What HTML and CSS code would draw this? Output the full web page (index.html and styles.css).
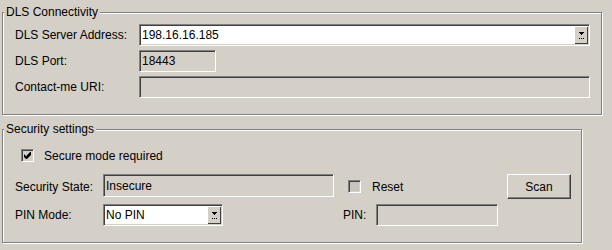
FILE: index.html
```html
<!DOCTYPE html>
<html lang="en">
<head>
    <meta charset="UTF-8">
    <meta name="viewport" content="width=device-width, initial-scale=1.0">
    <title>DLS Settings</title>
    <link rel="stylesheet" href="styles.css">
</head>
<body>
    <div class="panel">
        <div class="group group-dls">
            <span class="group-title">DLS Connectivity</span>
            <div class="form-grid">
                <label>DLS Server Address:</label>
                <div class="combo">
                    <span class="value">198.16.16.185</span>
                    <span class="drop-btn">
                        <svg width="7" height="8" viewBox="0 0 7 8"><path d="M1 0h5v1H1zM2 1h3v1H2zM3 2h1v1H3zM1 6h1v1H1zM3 6h1v1H3zM5 6h1v1H5z" fill="#000"/></svg>
                    </span>
                </div>
                <label>DLS Port:</label>
                <div class="field port">18443</div>
                <label>Contact-me URI:</label>
                <div class="field"></div>
            </div>
        </div>

        <div class="group group-security">
            <span class="group-title">Security settings</span>
            <div class="check-row">
                <span class="checkbox">
                    <svg width="7" height="7" viewBox="0 0 7 7"><path d="M6 0h1v3L3 7H2L0 5V2l2 2.2z" fill="#000"/></svg>
                </span>
                <span>Secure mode required</span>
            </div>
            <div class="security-grid">
                <label class="c1">Security State:</label>
                <div class="field state">Insecure</div>
                <div class="reset">
                    <span class="checkbox disabled"></span>
                    <span>Reset</span>
                </div>
                <button class="btn">Scan</button>

                <label class="c1">PIN Mode:</label>
                <div class="combo pin-mode">
                    <span class="value">No PIN</span>
                    <span class="drop-btn">
                        <svg width="7" height="8" viewBox="0 0 7 8"><path d="M1 0h5v1H1zM2 1h3v1H2zM3 2h1v1H3zM1 6h1v1H1zM3 6h1v1H3zM5 6h1v1H5z" fill="#000"/></svg>
                    </span>
                </div>
                <label class="pin-label">PIN:</label>
                <div class="field pin"></div>
            </div>
        </div>
    </div>
</body>
</html>
```

FILE: styles.css
```css
body {
    margin: 0;
    height: 250px;
    overflow: hidden;
    background-color: #d4d0c8;
    font-family: "Liberation Sans", Arial, sans-serif;
    font-size: 12px;
    color: #000;
}

.panel {
    padding: 12px 0 0 2px;
}

/* etched group box */
.group {
    position: relative;
    box-sizing: border-box;
    border: 1px solid #808080;
    box-shadow: inset 1px 1px 0 #fff, 1px 1px 0 #fff;
}

.group-title {
    position: absolute;
    top: -8px;
    left: 1px;
    padding: 0 2px;
    line-height: 14px;
    background-color: #d4d0c8;
}

.group-dls {
    width: 600px;
    height: 103px;
    padding: 11px 11px 0 12px;
}

.group-security {
    width: 580px;
    height: 114px;
    margin-top: 14px;
    padding: 19px 0 0 12px;
}

.form-grid {
    display: grid;
    grid-template-columns: 124px 1fr;
    grid-auto-rows: 22px;
    row-gap: 4px;
    align-items: center;
}

/* sunken inputs */
.field,
.combo {
    box-sizing: border-box;
    height: 22px;
    display: flex;
    align-items: center;
    padding-left: 2px;
    border-style: solid;
    border-width: 1px;
    border-color: #808080 #fff #fff #808080;
    box-shadow: inset 1px 1px 0 #404040, inset -1px -1px 0 #d4d0c8;
    background-color: #d4d0c8;
    white-space: nowrap;
}

.combo {
    background-color: #fff;
    padding: 1px 1px 1px 2px;
    align-items: stretch;
}

.combo .value {
    flex: 1;
    display: flex;
    align-items: center;
}

.drop-btn {
    width: 14px;
    display: flex;
    justify-content: center;
    align-items: flex-start;
    padding-top: 6px;
    box-sizing: border-box;
    background-color: #d4d0c8;
    box-shadow: inset 1px 1px 0 #fff, inset -1px -1px 0 #404040;
}

.port {
    width: 77px;
}

.check-row {
    display: flex;
    align-items: center;
    gap: 10px;
    height: 13px;
    margin-left: 6px;
    margin-bottom: 12px;
}

.checkbox {
    box-sizing: border-box;
    width: 13px;
    height: 13px;
    display: flex;
    justify-content: center;
    align-items: center;
    border-style: solid;
    border-width: 1px;
    border-color: #808080 #fff #fff #808080;
    box-shadow: inset 1px 1px 0 #404040, inset -1px -1px 0 #d4d0c8;
    background-color: #d4d0c8;
}

.checkbox.disabled {
    background-color: #c8c4bc;
}

.security-grid {
    display: grid;
    grid-template-columns: 88px 231px 9px 33px 122px 9px 64px;
    grid-template-rows: 25px 22px;
    row-gap: 5px;
    align-items: center;
}

.c1 {
    grid-column: 1;
}

.state {
    grid-column: 2;
    height: 23px;
    align-self: start;
}

.reset {
    grid-column: 4 / span 2;
    display: flex;
    align-items: center;
    gap: 11px;
    margin-left: 5px;
}

.btn {
    grid-column: 7;
    height: 25px;
    margin: 0;
    padding: 0;
    font: inherit;
    color: #000;
    background-color: #d4d0c8;
    border: 1px solid;
    border-color: #fff #404040 #404040 #fff;
    box-shadow: inset -1px -1px 0 #808080;
}

.pin-mode {
    grid-column: 2;
    width: 120px;
}

.pin-label {
    grid-column: 4;
}

.pin {
    grid-column: 5;
}
```
